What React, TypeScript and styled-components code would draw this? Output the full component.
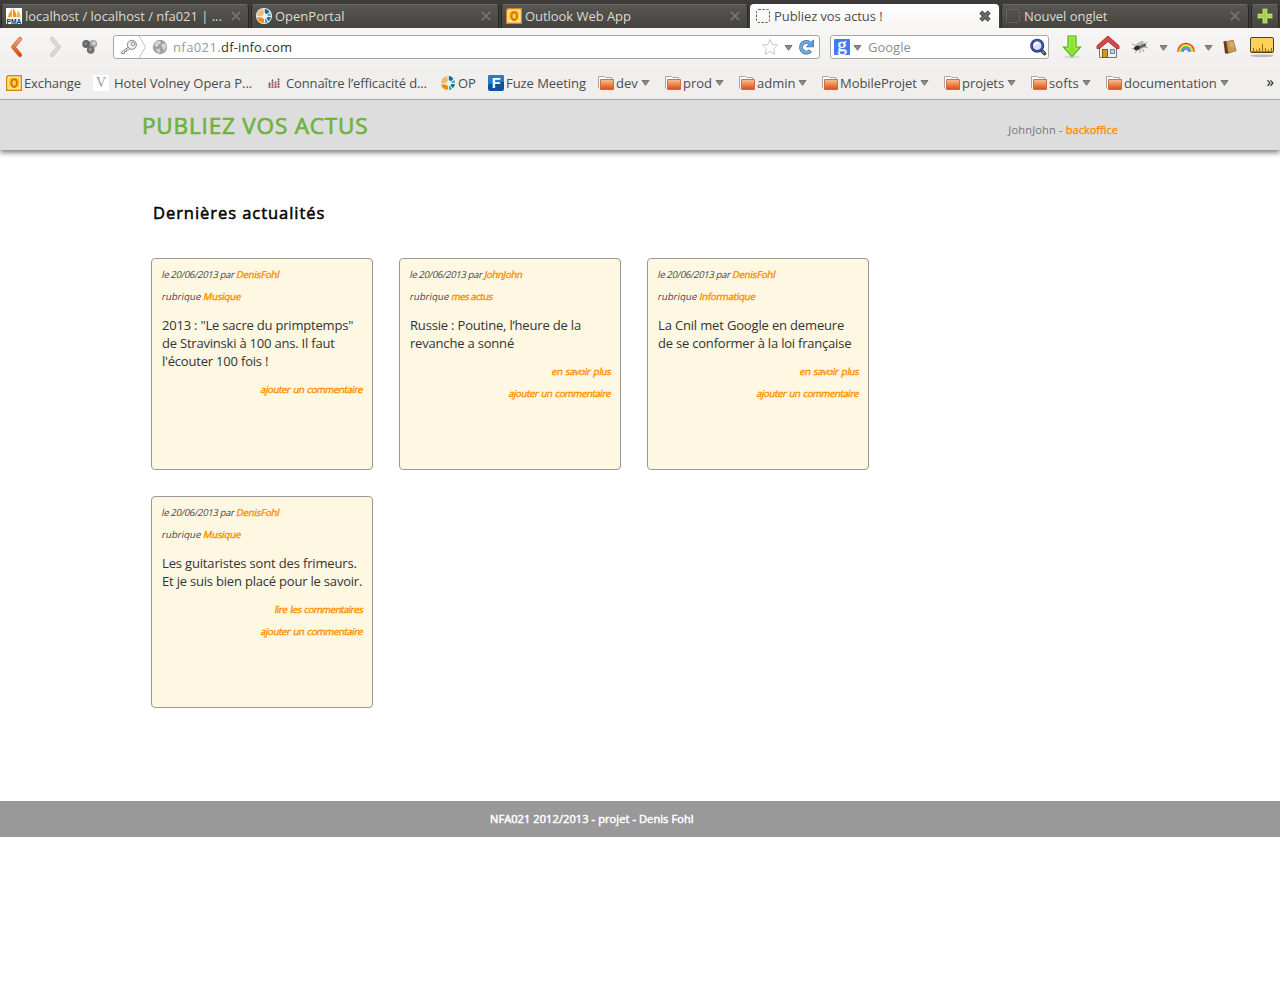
import React from 'react';
import styled, { createGlobalStyle, css } from 'styled-components';

const GlobalStyle = createGlobalStyle`
  * { box-sizing: border-box; }
  body {
    margin: 0;
    background: #fff;
    font-family: 'Open Sans', 'Noto Sans', sans-serif;
    font-size: 13px;
    color: #333;
    overflow-x: hidden;
  }
`;

/* ---------- icons ---------- */

const Svg = styled.svg`
  display: block;
  flex: none;
`;

const PmaIcon = () => (
  <Svg width="16" height="16" viewBox="0 0 16 16">
    <rect width="16" height="16" fill="#fff" />
    <path d="M6 1L6 9L1.500 9.500Q3 4 6 1Z" fill="#f9a32b" />
    <path d="M7 .5Q10.500 4 10.500 9L7 9Z" fill="#f78f0f" />
    <path d="M11.500 2Q14.500 5 14.800 9.500L11 9Z" fill="#f9b04a" />
    <text x="8" y="15.800" textAnchor="middle" textLength="15" lengthAdjust="spacingAndGlyphs" fontFamily="Liberation Sans, sans-serif" fontSize="7" fontWeight="700" fill="#25245e">PMA</text>
  </Svg>
);

const PortalIcon = () => (
  <Svg width="16" height="16" viewBox="0 0 16 16">
    <circle cx="8" cy="8" r="8" fill="#f1f4f4" />
    <path d="M7.200 1A7 7 0 0 0 1 8L5.500 8.500L8 6Z" fill="#f9b96c" />
    <path d="M1.200 9.200A7 7 0 0 0 7.800 15L8.200 11L5.500 9.500Z" fill="#f58a12" />
    <path d="M8.800 .8A7 7 0 0 1 13.500 3.800L10.800 6.200L8.800 5Z" fill="#176d8c" />
    <path d="M14.200 4.800A7 7 0 0 1 15 8.200L11.500 8L11.300 6.800Z" fill="#5ba9bd" />
    <path d="M15 9.200A7 7 0 0 1 12.800 13.300L10.500 10.500L11.300 9Z" fill="#176d8c" />
    <path d="M12 14A7 7 0 0 1 9 15.200L9 11.200L9.800 10.800Z" fill="#4a9fb6" />
    <path d="M6.500 7.500L9 5.500L11 8L9 10Z" fill="#e6eef0" />
  </Svg>
);

const OutlookIcon = () => (
  <Svg width="16" height="16" viewBox="0 0 16 16">
    <path d="M.7 3Q.7.7 3 .7H15.300V15.300H.7Z" fill="#fffbe6" stroke="#dc850c" strokeWidth="1.400" />
    <path d="M2.500 3.500L4 2.500H13.500V13.500H2.500Z" fill="#fbca2f" />
    <path d="M2.500 13.500L8 7L13.500 13.500Z" fill="#fde98a" />
    <ellipse cx="8.200" cy="8" rx="2.700" ry="3.900" fill="#fff0a2" stroke="#d97706" strokeWidth="2.200" />
    <path d="M8.200 5.500V10.500" stroke="#f9b40e" strokeWidth="1" />
  </Svg>
);

const BlankIcon = ({ color }: { color: string }) => (
  <Svg width="16" height="16" viewBox="0 0 16 16">
    <rect x="1.500" y="1.500" width="13" height="13" rx="2" fill="none" stroke={color} strokeDasharray="2.400 1.500" />
  </Svg>
);

const CloseIcon = ({ active }: { active?: boolean }) => (
  <Svg width="12" height="12" viewBox="0 0 12 12">
    {active && <path d="M1.800 2L10.200 10.200M10.200 2L1.800 10.200" stroke="#4b4b49" strokeWidth="4.400" />}
    <path d="M1.800 1.800L10.200 10.200M10.200 1.800L1.800 10.200" stroke={active ? '#6c6c6a' : '#75746f'} strokeWidth={active ? 2.200 : 1.900} />
  </Svg>
);

const PlusIcon = () => (
  <Svg width="16" height="16" viewBox="0 0 16 16">
    <path d="M5.500.6H10.500V5.500H15.400V10.500H10.500V15.400H5.500V10.500H.6V5.500H5.500Z" fill="#a4ca49" stroke="#6f8f2c" strokeWidth="1" />
    <path d="M6.500 1.600H9.500V6.500H14.400V9.500H9.500V14.400H6.500V9.500H1.600V6.500H6.500Z" fill="#a9cf4c" stroke="#c3de7c" strokeWidth=".9" />
  </Svg>
);

const BackIcon = () => (
  <Svg width="14" height="22" viewBox="0 0 14 22">
    <defs>
      <linearGradient id="back" x1="0" y1="0" x2="0" y2="1">
        <stop offset="0" stopColor="#f2a673" />
        <stop offset="1" stopColor="#dd4814" />
      </linearGradient>
    </defs>
    <path d="M10 3L3.300 11L10 19" fill="none" stroke="#c65a2b" strokeWidth="4.200" strokeLinejoin="round" strokeLinecap="round" />
    <path d="M10 3L3.300 11L10 19" fill="none" stroke="url(#back)" strokeWidth="2.800" strokeLinejoin="round" strokeLinecap="round" />
  </Svg>
);

const ForwardIcon = () => (
  <Svg width="14" height="22" viewBox="0 0 14 22">
    <path d="M4 3L10.700 11L4 19" fill="none" stroke="#c3c2c0" strokeWidth="4.200" strokeLinejoin="round" strokeLinecap="round" />
    <path d="M4 3L10.700 11L4 19" fill="none" stroke="#dad9d7" strokeWidth="2.800" strokeLinejoin="round" strokeLinecap="round" />
  </Svg>
);

const SpheresIcon = () => (
  <Svg width="16" height="16" viewBox="0 0 16 16">
    <circle cx="11.300" cy="4.800" r="3.900" fill="#a3a3a3" />
    <circle cx="11.800" cy="4.200" r="2" fill="#d0d0d0" />
    <circle cx="4.200" cy="5" r="3.900" fill="#666" />
    <circle cx="3.800" cy="4.600" r="1.400" fill="#8d8d8d" />
    <circle cx="8.700" cy="10.800" r="3.900" fill="#707070" />
    <circle cx="8.400" cy="10.200" r="1.500" fill="#999" />
  </Svg>
);

const KeyIcon = () => (
  <Svg width="18" height="16" viewBox="0 0 18 16">
    <path d="M8.600 8L1.500 13L1.300 14.500H4.500V12.600H6.500V11H8.300L10 9.500" fill="#f2f2f2" stroke="#888" strokeLinejoin="round" />
    <circle cx="11.900" cy="5.800" r="4.500" fill="#eee" stroke="#888" />
    <circle cx="13" cy="4.800" r="1.700" fill="#fff" stroke="#888" />
  </Svg>
);

const ChevronDivider = () => (
  <Svg width="9" height="22" viewBox="0 0 9 22">
    <path d="M1 0L7.500 11L1 22" fill="none" stroke="#c3c3c3" />
  </Svg>
);

const GlobeIcon = () => (
  <Svg width="16" height="16" viewBox="0 0 16 16">
    <circle cx="8" cy="8" r="7.200" fill="#a0a0a0" />
    <path d="M4 2.500L8 2L9 4L6 6L5.500 8L2.500 7Q2.500 4 4 2.500ZM10 5L13.500 4.500L14.500 8L12 12L10.500 8.500L9 7ZM4 10L7.500 9.500L8.500 13L6 14Z" fill="#d4d4d4" />
  </Svg>
);

const StarIcon = () => (
  <Svg width="18" height="18" viewBox="0 0 18 18">
    <path d="M9 1.500L11.200 6.500L16.600 7L12.600 10.800L13.700 16.300L9 13.400L4.300 16.300L5.400 10.800L1.400 7L6.800 6.500Z" fill="#fff" stroke="#c9c9c9" />
  </Svg>
);

const Caret = () => (
  <Svg width="9" height="6" viewBox="0 0 9 6">
    <path d="M1 .5H8L4.500 5.300Z" fill="#8a8a87" stroke="#6d6d69" strokeWidth=".9" />
  </Svg>
);

const ReloadIcon = () => (
  <Svg width="16" height="16" viewBox="0 0 16 16">
    <path d="M12.500 11.500A5.300 5.300 0 1 1 11.500 4" fill="none" stroke="#4a83b7" strokeWidth="4" />
    <path d="M15.500.8V7.800H8.500Z" fill="#5f9bd0" stroke="#4a83b7" />
    <path d="M12.200 11.800A5.300 5.300 0 1 1 12 4.300" fill="none" stroke="#7fb1dd" strokeWidth="1.800" />
  </Svg>
);

const GoogleMark = styled.span`
  flex: none;
  width: 16px;
  height: 16px;
  border-radius: 1px;
  background: #4479f6;
  color: #fff;
  font: 19px/12px 'Liberation Serif', serif;
  -webkit-text-stroke: 0.4px #fff;
  text-align: center;
`;

const SearchIcon = () => (
  <Svg width="18" height="18" viewBox="0 0 18 18">
    <path d="M12 12L15.500 15.500" stroke="#333" strokeWidth="3.600" strokeLinecap="round" />
    <path d="M12.500 12.500L15.500 15.500" stroke="#999" strokeWidth="1.200" />
    <circle cx="8.200" cy="7.700" r="5.700" fill="#d8e2f2" stroke="#25397d" strokeWidth="2.700" />
    <circle cx="8.200" cy="7.700" r="5.700" fill="none" stroke="#4661b2" strokeWidth="1" />
    <path d="M5 7.500Q6 4.500 9.500 4.700" fill="none" stroke="#fff" strokeWidth="2" />
  </Svg>
);

const DownloadIcon = () => (
  <Svg width="20" height="24" viewBox="0 0 20 24">
    <ellipse cx="10" cy="22" rx="8" ry="1.500" fill="#d8d8d6" />
    <path d="M6 1H14V12H18.500L10 21.500L1.500 12H6Z" fill="#8ae234" stroke="#55b817" strokeWidth="1.200" />
    <path d="M7.500 2.500H12.500V13.500H15.500L10 19.500L4.500 13.500H7.500Z" fill="none" stroke="#a5f04c" />
  </Svg>
);

const HomeIcon = () => (
  <Svg width="24" height="24" viewBox="0 0 24 24">
    <path d="M3.500 10.500L12 3L20.500 10.500V22.500H3.500Z" fill="#f1f1ef" stroke="#777" />
    <path d="M12 1L1 10.800V13.500H3.500L12 6.500L20.500 13.500H23V10.800Z" fill="#d34949" stroke="#a83232" strokeLinejoin="round" />
    <rect x="6.500" y="14.500" width="5" height="8" fill="#d39436" stroke="#8f5902" />
    <rect x="14.500" y="14.500" width="4" height="4" fill="#b8cfe5" stroke="#7a8894" />
  </Svg>
);

const FlyIcon = () => (
  <Svg width="18" height="14" viewBox="0 0 18 14">
    <path d="M1 4L6 6M1 9L6 7M4 13L8 8M9 13V8M13 12L10 7M17 8L11 6M16 2L11 5" stroke="#888" strokeWidth=".8" />
    <ellipse cx="9" cy="3.500" rx="4" ry="1.700" transform="rotate(-25 9 3.500)" fill="#b9b9b9" />
    <ellipse cx="11.500" cy="6" rx="4" ry="1.600" transform="rotate(-20 11.500 6)" fill="#666" />
    <ellipse cx="6" cy="8" rx="3" ry="2.300" transform="rotate(-25 6 8)" fill="#303030" />
  </Svg>
);

const RainbowIcon = () => (
  <Svg width="18" height="10" viewBox="0 0 18 10">
    {['#ff2020', '#ff9c1c', '#f7ec2d', '#2fd13a', '#399cf7', '#7955ec'].map((color, i) => (
      <path key={color} d={`M${0.8 + i * 1.1} 9.800A${8.2 - i * 1.1} ${8.5 - i * 1.1} 0 0 1 ${17.2 - i * 1.1} 9.800`} fill="none" stroke={color} strokeWidth="1.300" />
    ))}
  </Svg>
);

const BookIcon = () => (
  <Svg width="14" height="16" viewBox="0 0 14 16">
    <path d="M.5 2.500L10.500 1L13.500 12L3.500 15Z" fill="#8b5e2e" />
    <path d="M3.500 2L10.500 1.500L13 12L5.500 13.500Z" fill="#c99a5b" />
    <path d="M.5 2.500L3 2L5 14L2 14.500Z" fill="#67401c" />
    <path d="M7 5L10.500 4.500M7.300 7L10.800 6.500" stroke="#e6c48b" />
  </Svg>
);

const RulerIcon = () => (
  <Svg width="26" height="22" viewBox="0 0 26 22">
    <ellipse cx="13" cy="19.800" rx="12" ry="1.400" fill="#bcbbb8" />
    <rect x="1.500" y="1.500" width="23" height="15" rx="1.500" fill="#fdd05a" stroke="#4d4321" />
    <path d="M4.500 12V15.500M7.500 13.500V15.500M10.500 12V15.500M13.500 8V15.500M16.500 12V15.500M19.500 13.500V15.500M22.500 12V15.500" stroke="#9b6712" />
    <path d="M2.500 15.500H23.500" stroke="#b37a1b" />
  </Svg>
);

const FolderIcon = () => (
  <Svg width="17" height="16" viewBox="0 0 17 16">
    <defs>
      <linearGradient id="folder" x1="0" y1="0" x2="0" y2="1">
        <stop offset="0" stopColor="#f7c49d" />
        <stop offset=".55" stopColor="#ec8046" />
        <stop offset="1" stopColor="#d84a17" />
      </linearGradient>
    </defs>
    <path d="M.5 13.500V1.500H6.500L7.500 2.500H13.500V5" fill="#fcfcfb" stroke="#aaa7a2" />
    <path d="M2.500 4.500H15.500V14.500H2.500Z" fill="url(#folder)" stroke="#c4683a" strokeWidth=".9" />
  </Svg>
);

const VolneyMark = styled.span`
  flex: none;
  width: 16px;
  height: 16px;
  background: #fff;
  color: #999;
  font: 14px/16px 'Liberation Serif', serif;
  text-align: center;
`;

const BarsIcon = () => (
  <Svg width="12" height="10" viewBox="0 0 12 10">
    <path d="M1.500 4.500V10M4.500 1.500V10M7.500 3.500V10M10.500 .5V10" stroke="#6a5055" strokeWidth="1.600" strokeDasharray="1.700 .6" />
    <path d="M1.500 6V7M4.500 6V7M7.500 6V7M10.500 6V7M1.500 8.500V10M4.500 8.500V10M7.500 8.500V10M10.500 8.500V10" stroke="#b8555f" strokeWidth="1.600" />
  </Svg>
);

const FuzeIcon = () => (
  <Svg width="16" height="16" viewBox="0 0 16 16">
    <rect width="16" height="16" rx="2" fill="#0d539b" />
    <path d="M0 2Q0 0 2 0H14Q16 0 16 2V7Q8 6 0 10Z" fill="#277cc4" />
    <text x="8.300" y="13.300" textAnchor="middle" fontFamily="Liberation Sans, sans-serif" fontSize="14.500" fontWeight="700" fill="#fff">F</text>
  </Svg>
);

/* ---------- browser chrome ---------- */

const TabStrip = styled.div`
  display: flex;
  gap: 2px;
  height: 28px;
  padding: 4px 1px 0 1px;
  background: #3c3b37;
`;

const TabBox = styled.div<{ $active?: boolean; $width: number }>`
  display: flex;
  align-items: center;
  flex: none;
  width: ${p => p.$width}px;
  height: 24px;
  padding: 0 6px 1px 4px;
  border-radius: 4px 4px 0 0;
  border: 1px solid #282724;
  border-top-color: #6b6a66;
  border-bottom: 0;
  background: linear-gradient(#575652, #45443f);
  color: #dfdbd2;
  ${p => p.$active && css`
    padding-right: 7px;
    border-color: #fff;
    background: linear-gradient(#fff, #f6f5f4);
    color: #4c4c4c;
  `}
`;

const LastTab = styled(TabBox)`
  padding: 0 7px 1px 3px;
`;

const Label = styled.span<{ $spacing?: number }>`
  white-space: pre;
  line-height: 18px;
  letter-spacing: ${p => p.$spacing ?? 0}px;
`;

const TabLabel = styled(Label)`
  flex: 1;
  min-width: 0;
  margin-left: 3px;
`;

const NewTab = styled(TabBox)`
  justify-content: center;
  padding: 0 0 1px;
`;

const Toolbars = styled.div`
  height: 72px;
  border-bottom: 1px solid #aeaca8;
  background: linear-gradient(#f7f6f5, #f0efed 60%);
  color: #4c4c4c;
`;

const NavBar = styled.div`
  display: flex;
  align-items: center;
  height: 38px;
`;

const Slot = styled.div<{ $width: number }>`
  display: flex;
  flex: none;
  justify-content: center;
  width: ${p => p.$width}px;
`;

const CaretSlot = styled(Slot)`
  padding-top: 2px;
`;

const Field = styled.div<{ $width: number }>`
  display: flex;
  align-items: center;
  flex: none;
  width: ${p => p.$width}px;
  height: 24px;
  border: 1px solid #a9a7a3;
  border-radius: 3px;
  background: #fff;
`;

const Address = styled(Label)`
  flex: 1;
  margin-left: 5px;
  color: #999;
  letter-spacing: 0.4px;
  b { font-weight: 400; color: #333; letter-spacing: 0.14px; }
`;

const SearchHint = styled(Label)`
  flex: 1;
  margin-left: 6px;
  color: #8e8e8e;
`;

const Gap = styled.span<{ $width: number }>`
  flex: none;
  width: ${p => p.$width}px;
`;

const BookmarkBar = styled.div`
  display: flex;
  align-items: center;
  height: 34px;
  padding-left: 6px;
`;

const Bookmark = styled.div<{ $width: number; $gap?: number }>`
  display: flex;
  align-items: center;
  flex: none;
  gap: ${p => p.$gap ?? 2}px;
  width: ${p => p.$width}px;
`;

const FolderLabel = styled(Label)`
  margin: 0 1px 0 -1px;
`;

const Overflow = styled.span`
  margin-left: auto;
  padding: 0 6px 4px 0;
  font-size: 15px;
  line-height: 14px;
  color: #111;
`;

/* ---------- page ---------- */

const faux = css<{ $spacing?: number }>`
  font-weight: 400;
  -webkit-text-stroke: 0.5px currentColor;
  letter-spacing: ${p => p.$spacing ?? 0}px;
`;

const Header = styled.header`
  display: flex;
  justify-content: space-between;
  height: 50px;
  padding: 0 162px 0 142px;
  background: #ddd;
  box-shadow: 0 3px 5px #888;
`;

const SiteTitle = styled.h1`
  ${faux}
  -webkit-text-stroke-width: 0.7px;
  margin: 9px 0 0;
  font-size: 22.500px;
  line-height: 33px;
  white-space: nowrap;
  color: #6fb33f;
`;

const Account = styled.div<{ $spacing?: number }>`
  margin-top: 22px;
  font-size: 11px;
  line-height: 16px;
  color: #777;
  white-space: nowrap;
  letter-spacing: ${p => p.$spacing ?? 0}px;
`;

const Link = styled.a<{ $spacing?: number }>`
  ${faux}
  -webkit-text-stroke-width: 0.4px;
  color: #ff9000;
`;

const Main = styled.main`
  height: 651px;
  padding: 50px 0 0 151px;
`;

const Heading = styled.h2`
  ${faux}
  margin: 0 0 33px 2px;
  font-size: 16.500px;
  line-height: 25px;
  color: #000;
`;

const Cards = styled.div`
  display: grid;
  grid-template-columns: repeat(3, 222px);
  grid-auto-rows: 212px;
  gap: 26px;
`;

const Card = styled.article`
  padding: 9px 9px 0 10px;
  border: 1px solid #999;
  border-radius: 4px;
  background: #fef7e2;
`;

const Meta = styled.p<{ $right?: boolean }>`
  width: ${p => (p.$right ? 'auto' : 'max-content')};
  margin: 0 0 8px;
  font-size: 9.500px;
  line-height: 14px;
  text-align: ${p => (p.$right ? 'right' : 'left')};
  white-space: nowrap;
  color: #444;
`;

const Slanted = styled.span<{ $spacing?: number }>`
  display: inline-block;
  transform: skewX(-12deg);
  letter-spacing: ${p => p.$spacing ?? 0}px;
`;

const ActionLink = styled(Link)`
  word-spacing: 1px;
`;

const Body = styled.p`
  margin: 12px 0 13px;
  line-height: 18px;
  white-space: pre;
`;

const BodyLine = styled.span<{ $spacing?: number }>`
  display: block;
  letter-spacing: ${p => p.$spacing ?? 0}px;
`;

const Footer = styled.footer`
  height: 36px;
  padding: 10px 0 0 490px;
  background: #999;
  color: #fff;
  font-size: 11px;
  line-height: 16px;
`;

const FooterText = styled.span`
  ${faux}
`;

type Spaced = [text: string, spacing: number];
type Article = { author: Spaced; topic: Spaced; lines: Spaced[]; actions: Spaced[] };

const addComment: Spaced = ['ajouter un commentaire', -0.36];
const readMore: Spaced = ['en savoir plus', -0.29];

const articles: Article[] = [
  {
    author: ['DenisFohl', -0.1], topic: ['Musique', -0.14],
    lines: [['2013 : "Le sacre du primptemps"', -0.2], ['de Stravinski à 100 ans. Il faut', -0.21], ["l'écouter 100 fois !", -0.2]],
    actions: [addComment],
  },
  {
    author: ['JohnJohn', -0.25], topic: ['mes actus', -0.4],
    lines: [['Russie : Poutine, l’heure de la', -0.18], ['revanche a sonné', -0.19]],
    actions: [readMore, addComment],
  },
  {
    author: ['DenisFohl', -0.1], topic: ['Informatique', -0.2],
    lines: [['La Cnil met Google en demeure', -0.16], ['de se conformer à la loi française', -0.21]],
    actions: [readMore, addComment],
  },
  {
    author: ['DenisFohl', -0.1], topic: ['Musique', -0.14],
    lines: [['Les guitaristes sont des frimeurs.', -0.16], ['Et je suis bien placé pour le savoir.', -0.2]],
    actions: [['lire les commentaires', -0.42], addComment],
  },
];

const folders: [string, number, number][] = [
  ['dev', 67, 0], ['prod', 74, 0], ['admin', 83, 0], ['MobileProjet', 122, -0.06],
  ['projets', 87, -0.06], ['softs', 75, 0.1], ['documentation', 130, 0],
];

export default function App() {
  return (
    <>
      <GlobalStyle />
      <TabStrip>
        <TabBox $width={248}><PmaIcon /><TabLabel $spacing={-0.03}>localhost / localhost / nfa021 | ...</TabLabel><CloseIcon /></TabBox>
        <TabBox $width={248}><PortalIcon /><TabLabel>OpenPortal</TabLabel><CloseIcon /></TabBox>
        <TabBox $width={247}><OutlookIcon /><TabLabel $spacing={-0.05}>Outlook Web App</TabLabel><CloseIcon /></TabBox>
        <TabBox $width={249} $active><BlankIcon color="#555" /><TabLabel $spacing={-0.08}>Publiez vos actus !</TabLabel><CloseIcon active /></TabBox>
        <LastTab $width={248}><BlankIcon color="#73726e" /><TabLabel $spacing={-0.05}>Nouvel onglet</TabLabel><CloseIcon /></LastTab>
        <NewTab $width={28}><PlusIcon /></NewTab>
      </TabStrip>

      <Toolbars>
        <NavBar>
          <Slot $width={33}><BackIcon /></Slot>
          <Slot $width={44}><ForwardIcon /></Slot>
          <Slot $width={26}><SpheresIcon /></Slot>
          <Gap $width={10} />
          <Field $width={707}>
            <Gap $width={6} />
            <KeyIcon />
            <ChevronDivider />
            <Gap $width={5} />
            <GlobeIcon />
            <Address>nfa021.<b>df-info.com</b></Address>
            <StarIcon />
            <Gap $width={5} />
            <CaretSlot $width={9}><Caret /></CaretSlot>
            <Gap $width={5} />
            <ReloadIcon />
            <Gap $width={5} />
          </Field>
          <Gap $width={10} />
          <Field $width={219}>
            <Gap $width={3} />
            <GoogleMark>g</GoogleMark>
            <Gap $width={3} />
            <CaretSlot $width={9}><Caret /></CaretSlot>
            <SearchHint>Google</SearchHint>
            <SearchIcon />
            <Gap $width={1} />
          </Field>
          <Slot $width={46}><DownloadIcon /></Slot>
          <Slot $width={26}><HomeIcon /></Slot>
          <Slot $width={38}><FlyIcon /></Slot>
          <CaretSlot $width={8}><Caret /></CaretSlot>
          <Slot $width={38}><RainbowIcon /></Slot>
          <CaretSlot $width={6}><Caret /></CaretSlot>
          <Slot $width={37}><BookIcon /></Slot>
          <Slot $width={28}><RulerIcon /></Slot>
        </NavBar>
        <BookmarkBar>
          <Bookmark $width={87}><OutlookIcon /><Label $spacing={-0.1}>Exchange</Label></Bookmark>
          <Bookmark $width={175} $gap={5}><VolneyMark>V</VolneyMark><Label $spacing={-0.05}>Hotel Volney Opera P...</Label></Bookmark>
          <Bookmark $width={172} $gap={6}><BarsIcon /><Label $spacing={-0.13}>Connaître l’efficacité d...</Label></Bookmark>
          <Bookmark $width={48}><PortalIcon /><Label>OP</Label></Bookmark>
          <Bookmark $width={110}><FuzeIcon /><Label $spacing={-0.06}>Fuze Meeting</Label></Bookmark>
          {folders.map(([name, width, spacing]) => (
            <Bookmark key={name} $width={width}><FolderIcon /><FolderLabel $spacing={spacing}>{name}</FolderLabel><Caret /></Bookmark>
          ))}
          <Overflow>»</Overflow>
        </BookmarkBar>
      </Toolbars>

      <Header>
        <SiteTitle $spacing={0.83}>PUBLIEZ VOS ACTUS</SiteTitle>
        <Account $spacing={0.2}>JohnJohn - <Link>backoffice</Link></Account>
      </Header>

      <Main>
        <Heading $spacing={0.95}>Dernières actualités</Heading>
        <Cards>
          {articles.map(({ author, topic, lines, actions }, i) => (
            <Card key={i}>
              <Meta><Slanted $spacing={-0.33}>le 20/06/2013 par <Link $spacing={author[1]}>{author[0]}</Link></Slanted></Meta>
              <Meta><Slanted $spacing={0.05}>rubrique <Link $spacing={topic[1]}>{topic[0]}</Link></Slanted></Meta>
              <Body>
                {lines.map(([line, spacing]) => <BodyLine key={line} $spacing={spacing}>{line}</BodyLine>)}
              </Body>
              {actions.map(([action, spacing]) => (
                <Meta key={action} $right><Slanted><ActionLink $spacing={spacing}>{action}</ActionLink></Slanted></Meta>
              ))}
            </Card>
          ))}
        </Cards>
      </Main>

      <Footer><FooterText $spacing={0.1}>NFA021 2012/2013 - projet - Denis Fohl</FooterText></Footer>
    </>
  );
}
